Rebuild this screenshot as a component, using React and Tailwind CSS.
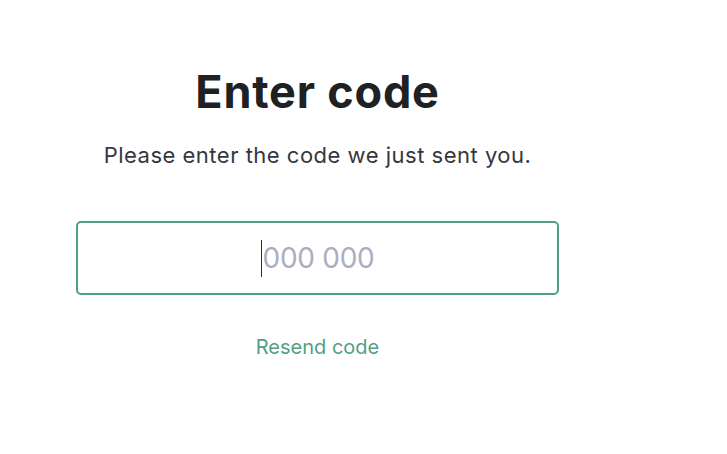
import React from "react";

const App = () => {
  return (
    <div
      className="min-h-[454px] bg-white"
      style={{ fontFamily: "Inter, 'Noto Sans', sans-serif" }}
    >
      <div className="ml-[76px] w-[483px] pt-[63px] flex flex-col items-center">
        {/* Heading */}
        <h1 className="text-[45px] leading-[58px] font-bold text-[#202123] tracking-[0.8px]">
          Enter code
        </h1>
        <p className="mt-[20px] text-[22px] leading-[28px] text-[#353740] tracking-[0.5px]">
          Please enter the code we just sent you.
        </p>

        {/* Code input */}
        <div className="mt-[52px] w-full h-[74px] border-2 border-[#4f9f83] rounded-[5px] flex items-center justify-center">
          <span className="w-px h-[37px] bg-[#2d2d3a] mr-px"></span>
          <span className="text-[28px] text-[#aeadbf] tracking-[-0.3px]">
            000 000
          </span>
        </div>

        <button className="mt-[39px] text-[20px] leading-[26px] text-[#4f9f83]">
          Resend code
        </button>
      </div>
    </div>
  );
};

export default App;
